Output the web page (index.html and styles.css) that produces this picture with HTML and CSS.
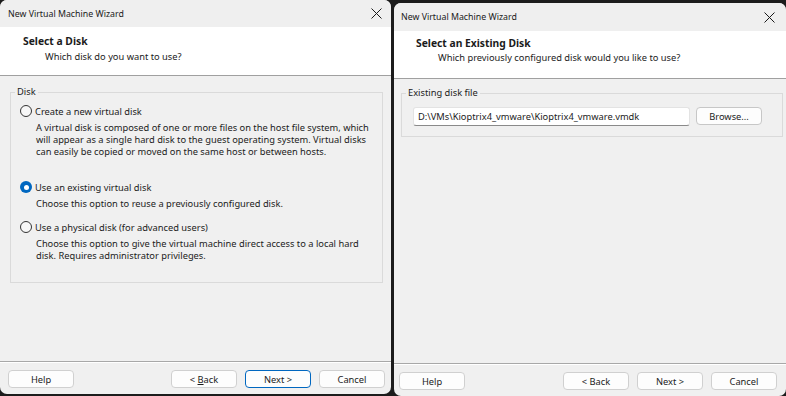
FILE: index.html
```html
<!DOCTYPE html>
<html lang="en">
<head>
	<meta charset="utf-8" />
	<title>New Virtual Machine Wizard</title>
	<link rel="stylesheet" href="styles.css">
</head>
<body>
	<div class="desk">
		<!-- step: select a disk -->
		<div class="win win-left">
			<div class="titlebar">
				<span class="caption">New Virtual Machine Wizard</span>
				<svg class="close" width="11" height="11" viewBox="0 0 11 11"><path d="M0.5 0.5 L10.5 10.5 M10.5 0.5 L0.5 10.5" /></svg>
			</div>
			<div class="header">
				<div class="h-title">Select a Disk</div>
				<div class="h-sub">Which disk do you want to use?</div>
			</div>
			<div class="content">
				<fieldset class="group group-disk">
					<legend>Disk</legend>
					<div class="option first"><span class="radio"></span>Create a new virtual disk</div>
					<p class="desc desc-new">
						A virtual disk is composed of one or more files on the host file system, which<br />
						will appear as a single hard disk to the guest operating system. Virtual disks<br />
						can easily be copied or moved on the same host or between hosts.
					</p>
					<div class="option"><span class="radio checked"></span>Use an existing virtual disk</div>
					<p class="desc desc-existing">Choose this option to reuse a previously configured disk.</p>
					<div class="option"><span class="radio"></span>Use a physical disk (for advanced users)</div>
					<p class="desc">
						Choose this option to give the virtual machine direct access to a local hard<br />
						disk. Requires administrator privileges.
					</p>
				</fieldset>
			</div>
			<div class="footer">
				<button class="btn">Help</button>
				<span class="spacer"></span>
				<button class="btn">&lt; <u>B</u>ack</button>
				<button class="btn default">Next &gt;</button>
				<button class="btn">Cancel</button>
			</div>
		</div>

		<!-- step: select an existing disk -->
		<div class="win win-right">
			<div class="titlebar">
				<span class="caption">New Virtual Machine Wizard</span>
				<svg class="close" width="11" height="11" viewBox="0 0 11 11"><path d="M0.5 0.5 L10.5 10.5 M10.5 0.5 L0.5 10.5" /></svg>
			</div>
			<div class="header">
				<div class="h-title">Select an Existing Disk</div>
				<div class="h-sub">Which previously configured disk would you like to use?</div>
			</div>
			<div class="content">
				<fieldset class="group group-file">
					<legend>Existing disk file</legend>
					<div class="file-row">
						<input class="file-input" type="text" value="D:\VMs\Kioptrix4_vmware\Kioptrix4_vmware.vmdk" />
						<button class="btn browse">Browse...</button>
					</div>
				</fieldset>
			</div>
			<div class="footer">
				<button class="btn">Help</button>
				<span class="spacer"></span>
				<button class="btn">&lt; Back</button>
				<button class="btn">Next &gt;</button>
				<button class="btn">Cancel</button>
			</div>
		</div>
	</div>
</body>
</html>
```

FILE: styles.css
```css
html, body {
	margin:0;
	padding:0;
}
body {
	background:#1c1c1c;
	font-family:"Noto Sans", "Liberation Sans", sans-serif;
	font-size:9.3px;
	color:#1b1b1b;
}
/*-------------------*/
.desk {
	display:flex;
	gap:3px;
	width:786px;
	height:396px;
	overflow:hidden;
}
.win {
	display:flex;
	flex-direction:column;
	background:#f0f0f0;
	border-radius:7px;
	overflow:hidden;
}
.win-left {
	width:391px;
	height:394px;
}
.win-right {
	width:392px;
	height:393px;
	margin-top:3px;
}
/*-------------------*/
.titlebar {
	display:flex;
	align-items:center;
	justify-content:space-between;
	flex:none;
	background:#efefef;
	font-size:8.8px;
	color:#1a1a1a;
}
.win-left .titlebar {
	height:27px;
	padding:0 9px 0 8px;
}
.win-right .titlebar {
	height:28px;
	padding:0 11px 0 7px;
}
.close path {
	stroke:#1a1a1a;
	stroke-width:1;
	fill:none;
}
/*-------------------*/
.header {
	flex:none;
	height:48px;
	background:#fff;
	border-bottom:1px solid #a0a0a0;
	box-sizing:content-box;
	line-height:14px;
}
.win-left .header {
	padding:7px 0 0 23px;
	height:41px;
}
.win-right .header {
	padding:5px 0 0 22px;
	height:42px;
}
.h-title {
	font-weight:bold;
	font-size:10.3px;
}
.h-sub {
	margin:2px 0 0 22px;
}
.win-right .h-sub {
	margin-top:1px;
}
/*-------------------*/
.content {
	flex:1;
}
.win-left .content {
	padding-top:10px;
}
.win-right .content {
	padding-top:8px;
}
.group {
	margin:0;
	padding:0;
	border:1px solid #dadada;
	min-width:0;
}
.group legend {
	margin-left:4px;
	padding:0 2px;
	line-height:12px;
}
.group-disk {
	margin:0 8px 0 10px;
	padding-bottom:20px;
}
.group-file {
	margin:0 3px 0 7px;
	padding-bottom:10px;
}
.option {
	display:flex;
	align-items:center;
	height:16px;
	margin:0 0 0 9px;
}
.option.first {
	margin-top:5px;
}
.radio {
	box-sizing:border-box;
	width:12px;
	height:12px;
	margin-right:3px;
	border:1px solid #333;
	border-radius:50%;
	background:#f7f7f7;
}
.radio.checked {
	border:none;
	background:#0067c0;
	display:flex;
	align-items:center;
	justify-content:center;
}
.radio.checked::after {
	content:"";
	width:5px;
	height:5px;
	border-radius:50%;
	background:#fff;
}
.desc {
	margin:3px 0 9px 25px;
	line-height:12px;
	white-space:nowrap;
}
.desc-new {
	margin-bottom:21px;
}
.group-disk .desc:last-child {
	margin-bottom:0;
}
/*-------------------*/
.file-row {
	display:flex;
	align-items:flex-start;
	margin:8px 0 0 11px;
}
.file-input {
	box-sizing:border-box;
	width:277px;
	height:19px;
	margin:0;
	padding:0 4px;
	border:1px solid #e3e3e3;
	border-bottom-color:#8a8a8a;
	border-radius:3px;
	background:#fff;
	font-family:inherit;
	font-size:9.3px;
	color:#1b1b1b;
}
.browse {
	margin-left:6px;
	width:68px;
}
/*-------------------*/
.footer {
	display:flex;
	align-items:flex-start;
	gap:8px;
	flex:none;
	height:32px;
	border-top:1px solid #a8a8a8;
	box-shadow:inset 0 1px 0 #fff;
	box-sizing:content-box;
}
.win-left .footer {
	padding:0 6px 0 8px;
}
.win-right .footer {
	padding:0 9px 0 5px;
}
.spacer {
	flex:1;
}
.btn {
	box-sizing:border-box;
	width:66px;
	height:18px;
	margin-top:8px;
	padding:0;
	background:#fdfdfd;
	border:1px solid #d0d0d0;
	border-radius:4px;
	font-family:inherit;
	font-size:9.3px;
	color:#1b1b1b;
}
.file-row .btn {
	margin-top:0;
	border-color:#c7c7c7;
}
.btn.default {
	border-color:#0067c0;
}
```
